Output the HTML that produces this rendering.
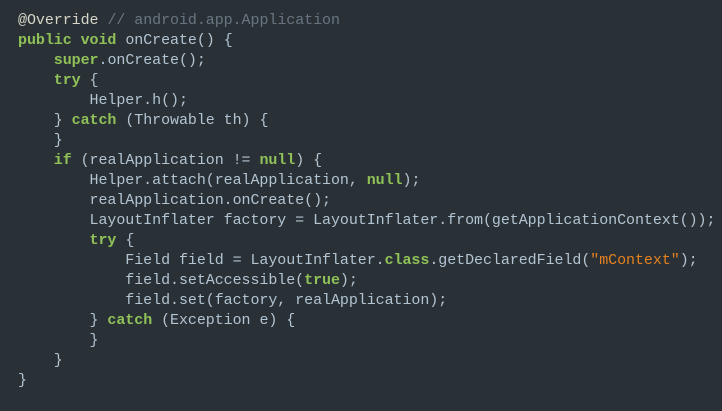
<!DOCTYPE html>
<html><head><meta charset="utf-8"><style>
html,body{margin:0;padding:0;background:#2a3136;width:722px;height:411px;overflow:hidden}
pre{margin:0;padding:11px 0 0 18px;font-family:"Liberation Mono",monospace;font-size:15px;letter-spacing:-0.06px;line-height:20px;color:#b2c3d2}
.k{color:#8fc158;font-weight:bold}
.c{color:#687580}
.s{color:#e5801f}
.a{color:#d6d6c8}
</style></head><body><pre><span class="a">@Override</span> <span class="c">// android.app.Application</span>
<span class="k">public</span> <span class="k">void</span> onCreate() {
    <span class="k">super</span>.onCreate();
    <span class="k">try</span> {
        Helper.h();
    } <span class="k">catch</span> (Throwable th) {
    }
    <span class="k">if</span> (realApplication != <span class="k">null</span>) {
        Helper.attach(realApplication, <span class="k">null</span>);
        realApplication.onCreate();
        LayoutInflater factory = LayoutInflater.from(getApplicationContext());
        <span class="k">try</span> {
            Field field = LayoutInflater.<span class="k">class</span>.getDeclaredField(<span class="s">"mContext"</span>);
            field.setAccessible(<span class="k">true</span>);
            field.set(factory, realApplication);
        } <span class="k">catch</span> (Exception e) {
        }
    }
}</pre></body></html>
